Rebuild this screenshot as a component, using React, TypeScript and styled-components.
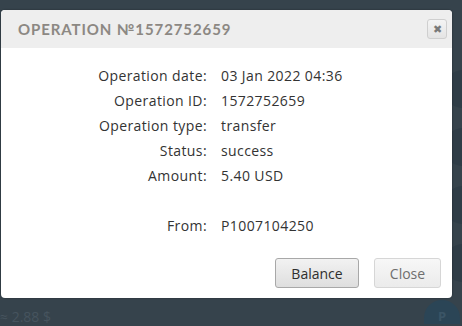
import React from 'react';
import styled, { createGlobalStyle } from 'styled-components';

const GlobalStyle = createGlobalStyle`
    html, body {
        margin: 0;
        padding: 0;
        background: #36434c;
        overflow: hidden;
    }
`

const rows: [string, string][] = [
    ['Operation date:', '03 Jan 2022 04:36'],
    ['Operation ID:', '1572752659'],
    ['Operation type:', 'transfer'],
    ['Status:', 'success'],
    ['Amount:', '5.40 USD'],
    ['', ''],
    ['From:', 'P1007104250'],
]

function App() {
    return (
        <>
            <GlobalStyle />
            <Page>
                <SideStrip>
                    <Dot />
                    <Dot />
                    <Dot />
                    <Dot />
                </SideStrip>
                <Footer>
                    <Balance>≈ 2.88 $</Balance>
                    <Avatar>P</Avatar>
                </Footer>
            </Page>
            <Dialog>
                <Header>
                    <Title>Operation №1572752659</Title>
                    <CloseX aria-label="close">✖</CloseX>
                </Header>
                <Body>
                    <Details>
                        {rows.map(([label, value], i) => (
                            <React.Fragment key={i}>
                                <Label>{label}</Label>
                                <Value>{value}</Value>
                            </React.Fragment>
                        ))}
                    </Details>
                    <Actions>
                        <Button>Balance</Button>
                        <Button $muted>Close</Button>
                    </Actions>
                </Body>
            </Dialog>
        </>
    );
}

const Page = styled.div`
    position: relative;
    height: 326px;
    overflow: hidden;
    display: flex;
    flex-direction: column;
    justify-content: flex-end;
`

// avatars of the list behind the dialog, only their left halves show
const SideStrip = styled.div`
    position: absolute;
    left: 452px;
    top: 70px;
    width: 10px;
    overflow: hidden;
    display: flex;
    flex-direction: column;
    gap: 20px;
`

const Dot = styled.div`
    width: 38px;
    height: 38px;
    margin-left: -8px;
    border-radius: 50%;
    background: #2f3d47;
`

const Footer = styled.div`
    display: flex;
    align-items: flex-end;
    justify-content: space-between;
    padding: 0 2px 2px 0;
    height: 26px;
`

const Balance = styled.span`
    font-family: "Open Sans", sans-serif;
    font-size: 14px;
    color: #46545e;
    line-height: 15px;
`

const Avatar = styled.div`
    width: 36px;
    height: 24px;
    border-radius: 18px 18px 0 0;
    background: #2b4556;
    color: #3b5566;
    font-family: "Open Sans", sans-serif;
    font-weight: bold;
    font-size: 13px;
    line-height: 14px;
    display: flex;
    justify-content: center;
    align-items: flex-end;
    padding-bottom: 1px;
    box-sizing: border-box;
`

const Dialog = styled.div`
    position: absolute;
    left: 1px;
    top: 10px;
    width: 451px;
    height: 288px;
    background: #ffffff;
    border-radius: 4px;
    box-shadow: 0 0 2px rgba(0, 0, 0, 0.4);
    display: flex;
    flex-direction: column;
    overflow: hidden;
`

const Header = styled.div`
    height: 38px;
    flex-shrink: 0;
    background: #eeeeee;
    display: flex;
    align-items: center;
    justify-content: space-between;
    padding: 0 5px 0 17px;
`

const Title = styled.span`
    font-family: "Lato", "Noto Sans", sans-serif;
    text-transform: uppercase;
    font-size: 15px;
    font-weight: 700;
    letter-spacing: 0.9px;
    color: #8c8883;
`

const CloseX = styled.button`
    width: 20px;
    height: 20px;
    padding: 0;
    border: 1px solid #cfcfcf;
    border-radius: 3px;
    background: linear-gradient(#f4f4f4, #e4e4e4);
    color: #7a7a7a;
    font-size: 11px;
    line-height: 18px;
    display: flex;
    align-items: center;
    justify-content: center;
`

const Body = styled.div`
    flex: 1;
    display: flex;
    flex-direction: column;
    padding: 15px 11px 10px 0;
`

const Details = styled.div`
    display: grid;
    grid-template-columns: 206px 1fr;
    column-gap: 14px;
    grid-auto-rows: 25px;
    align-items: center;
    font-family: "Open Sans", sans-serif;
    font-size: 14px;
    letter-spacing: 0.4px;
    color: #333333;
`

const Label = styled.span`
    text-align: right;
`

const Value = styled.span``

const Actions = styled.div`
    margin-top: auto;
    display: flex;
    justify-content: flex-end;
    gap: 15px;
`

const Button = styled.button<{ $muted?: boolean }>`
    height: 30px;
    padding: 0 14px;
    border-radius: 3px;
    font-family: "Open Sans", sans-serif;
    font-size: 14px;
    border: 1px solid ${props => props.$muted ? '#d6d6d6' : '#a8a8a8'};
    color: ${props => props.$muted ? '#6e6e6e' : '#2e2e2e'};
    background: ${props => props.$muted
        ? 'linear-gradient(#f7f7f7, #ebebeb)'
        : 'linear-gradient(#f2f2f2, #dedede)'};
    min-width: ${props => props.$muted ? '67px' : '84px'};
`

export default App;
